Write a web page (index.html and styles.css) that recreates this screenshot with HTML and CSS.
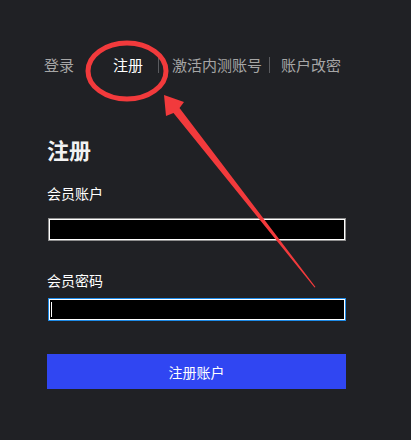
FILE: index.html
```html
<!DOCTYPE html>
<html lang="zh">
<head>
<meta charset="utf-8">
<title>注册</title>
<link rel="stylesheet" href="styles.css">
</head>
<body>
<div class="page">
  <nav class="tabs">
    <a class="tab">登录</a>
    <a class="tab active">注册</a>
    <span class="sep"></span>
    <a class="tab tab-activate">激活内测账号</a>
    <span class="sep sep2"></span>
    <a class="tab tab-pass">账户改密</a>
  </nav>
  <h1 class="title">注册</h1>
  <label class="label label-first">会员账户</label>
  <div class="field"><input class="input" type="text"></div>
  <label class="label label-second">会员密码</label>
  <div class="field field-focus"><input class="input input-focus" type="password"><span class="caret"></span></div>
  <button class="submit">注册账户</button>
</div>
<svg class="annot" width="411" height="440" viewBox="0 0 411 440">
  <ellipse cx="127" cy="71" rx="39" ry="28" fill="none" stroke="#f23a3c" stroke-width="5"/>
  <polygon fill="#f23a3c" points="164,95 184,102 179.5,108 315.5,287 314.5,287.5 173.5,113 166,116"/>
</svg>
</body>
</html>
```
FILE: styles.css
```css
html, body {
  margin: 0;
  padding: 0;
  background: #202125;
}
body {
  width: 411px;
  height: 440px;
  position: relative;
  overflow: hidden;
  font-family: "Noto Sans CJK SC", "Noto Sans", sans-serif;
  color: #ffffff;
}
.page {
  padding: 55px 0 0 47px;
}
.tabs {
  display: flex;
  align-items: center;
  height: 20px;
  margin-left: -3px;
}
.tab {
  font-size: 15px;
  line-height: 20px;
  color: #a6a6a6;
}
.tab.active {
  color: #ffffff;
  margin-left: 39px;
}
.sep {
  width: 1px;
  height: 16px;
  background: #5a5b5f;
  margin-left: 15px;
}
.tab-activate {
  margin-left: 13px;
}
.sep2 {
  margin-left: 7px;
}
.tab-pass {
  margin-left: 11px;
}
.title {
  margin: 62px 0 0 0;
  font-size: 22px;
  line-height: 24px;
  font-weight: bold;
  color: #f2f2f2;
}
.label {
  display: block;
  font-size: 14px;
  line-height: 20px;
  color: #ffffff;
}
.label-first {
  margin-top: 22px;
}
.label-second {
  margin-top: 29px;
}
.field {
  position: relative;
  margin: 15px 0 0 1px;
  width: 298px;
  height: 23px;
}
.field-focus {
  margin-top: 8px;
}
.input {
  display: block;
  box-sizing: border-box;
  width: 298px;
  height: 23px;
  margin: 0;
  padding: 0 4px;
  background: #000000;
  border: 1px solid #8f8f8f;
  box-shadow: inset 0 0 0 1px #ffffff;
  outline: none;
  color: #fff;
}
.input-focus {
  border-color: #1e8ae6;
}
.caret {
  position: absolute;
  left: 3px;
  top: 4px;
  width: 1px;
  height: 15px;
  background: #ffffff;
}
.submit {
  display: block;
  margin-top: 33px;
  width: 299px;
  height: 35px;
  border: 0;
  padding: 0;
  background: #3046f2;
  color: #ffffff;
  font-family: "Noto Sans CJK SC", "Noto Sans", sans-serif;
  font-size: 14px;
}
.annot {
  position: absolute;
  left: 0;
  top: 0;
  pointer-events: none;
}
```
